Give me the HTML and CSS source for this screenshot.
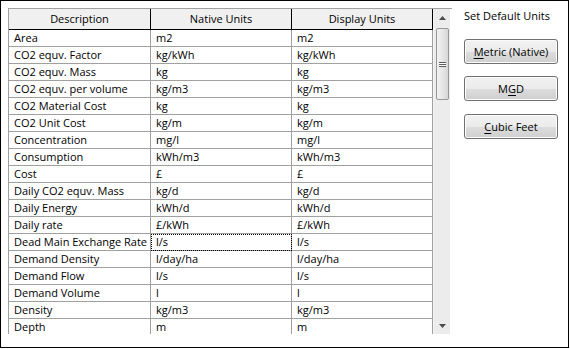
FILE: index.html
```html
<!DOCTYPE html>
<html>
	<head>
		<meta charset="utf-8" />
		<title>Units</title>
		<link rel="stylesheet" href="styles.css">
	</head>
	<body>
		<div class="window">
			<div class="grid">
				<div class="table">
					<div class="row head">
						<div class="cell">Description</div>
						<div class="cell">Native Units</div>
						<div class="cell">Display Units</div>
					</div>
					<div class="row"><div class="cell">Area</div><div class="cell">m2</div><div class="cell">m2</div></div>
					<div class="row"><div class="cell">CO2 equv. Factor</div><div class="cell">kg/kWh</div><div class="cell">kg/kWh</div></div>
					<div class="row"><div class="cell">CO2 equv. Mass</div><div class="cell">kg</div><div class="cell">kg</div></div>
					<div class="row"><div class="cell">CO2 equv. per volume</div><div class="cell">kg/m3</div><div class="cell">kg/m3</div></div>
					<div class="row"><div class="cell">CO2 Material Cost</div><div class="cell">kg</div><div class="cell">kg</div></div>
					<div class="row"><div class="cell">CO2 Unit Cost</div><div class="cell">kg/m</div><div class="cell">kg/m</div></div>
					<div class="row"><div class="cell">Concentration</div><div class="cell">mg/l</div><div class="cell">mg/l</div></div>
					<div class="row"><div class="cell">Consumption</div><div class="cell">kWh/m3</div><div class="cell">kWh/m3</div></div>
					<div class="row"><div class="cell">Cost</div><div class="cell">£</div><div class="cell">£</div></div>
					<div class="row"><div class="cell">Daily CO2 equv. Mass</div><div class="cell">kg/d</div><div class="cell">kg/d</div></div>
					<div class="row"><div class="cell">Daily Energy</div><div class="cell">kWh/d</div><div class="cell">kWh/d</div></div>
					<div class="row"><div class="cell">Daily rate</div><div class="cell">£/kWh</div><div class="cell">£/kWh</div></div>
					<div class="row"><div class="cell">Dead Main Exchange Rate</div><div class="cell focus">l/s</div><div class="cell">l/s</div></div>
					<div class="row"><div class="cell">Demand Density</div><div class="cell">l/day/ha</div><div class="cell">l/day/ha</div></div>
					<div class="row"><div class="cell">Demand Flow</div><div class="cell">l/s</div><div class="cell">l/s</div></div>
					<div class="row"><div class="cell">Demand Volume</div><div class="cell">l</div><div class="cell">l</div></div>
					<div class="row"><div class="cell">Density</div><div class="cell">kg/m3</div><div class="cell">kg/m3</div></div>
					<div class="row"><div class="cell">Depth</div><div class="cell">m</div><div class="cell">m</div></div>
				</div>
				<!-- 滚动条 -->
				<div class="scroll">
					<div class="arrow">
						<svg width="7" height="4" viewBox="0 0 7 4"><path d="M0 4H7L3.5 0Z" fill="#4d4d4d"/></svg>
					</div>
					<div class="track">
						<div class="thumb"><span class="grip"></span></div>
					</div>
					<div class="arrow">
						<svg width="7" height="4" viewBox="0 0 7 4"><path d="M0 0H7L3.5 4Z" fill="#4d4d4d"/></svg>
					</div>
				</div>
			</div>
			<div class="side">
				<p class="title">Set Default Units</p>
				<button class="btn"><u>M</u>etric (Native)</button>
				<button class="btn">M<u>G</u>D</button>
				<button class="btn last"><u>C</u>ubic Feet</button>
			</div>
		</div>
	</body>
</html>
```

FILE: styles.css
```css
*{
	margin: 0;
	padding: 0;
	box-sizing: border-box;
}
body{
	font-family: "Open Sans", "Noto Sans", sans-serif;
	font-size: 11px;
	color: #000;
	background: #fff;
}
.window{
	width: 569px;
	height: 348px;
	border: 1px solid #000;
	padding: 7px;
	display: flex;
	gap: 12px;
}
.grid{
	width: 444px;
	height: 326px;
	border-top: 1px solid #a0a0a0;
	border-left: 1px solid #a0a0a0;
	display: flex;
	overflow: hidden;
}
.table{
	width: 424px;
}
.row{
	display: grid;
	grid-template-columns: 142px 141px 141px;
	height: 17px;
	line-height: 16px;
}
.cell{
	border-right: 1px solid #a0a0a0;
	border-bottom: 1px solid #a0a0a0;
	padding-left: 5px;
	white-space: nowrap;
	overflow: hidden;
}
.head{
	height: 21px;
	line-height: 20px;
	background: #f0f0f0;
}
.head .cell{
	border-color: #000;
	text-align: center;
	padding-left: 0;
}
.focus{
	outline: 1px dotted #000;
	outline-offset: -1px;
}
.scroll{
	width: 17px;
	display: flex;
	flex-direction: column;
	background: #ececec;
	border-left: 1px solid #f4f4f4;
}
.arrow{
	height: 17px;
	display: flex;
	align-items: center;
	justify-content: center;
}
.track{
	flex: 1;
	padding-top: 2px;
}
.thumb{
	margin: 0 1px 0 2px;
	height: 72px;
	border: 1px solid #979797;
	border-radius: 2px;
	background: linear-gradient(to right, #f2f2f2, #e6e6e6 50%, #d6d6d6);
	display: flex;
	align-items: center;
	justify-content: center;
}
.grip{
	width: 7px;
	height: 5px;
	border-top: 1px solid #5c5c5c;
	border-bottom: 1px solid #5c5c5c;
	background: linear-gradient(#fff 0 1px, #5c5c5c 1px 2px, #fff 2px);
	background-size: 100% 3px;
	background-repeat: no-repeat;
}
.side{
	display: flex;
	flex-direction: column;
	align-items: flex-start;
	gap: 12px;
	font-size: 11px;
}
.title{
	line-height: 16px;
	margin-bottom: 3px;
}
.btn{
	width: 94px;
	height: 25px;
	font-family: inherit;
	font-size: 11px;
	color: #000;
	border: 1px solid #707070;
	border-radius: 3px;
	background: linear-gradient(#f2f2f2, #ebebeb 50%, #dddddd 51%, #cfcfcf);
	box-shadow: inset 0 0 0 1px #fcfcfc;
}
.btn.last{
	margin-top: 1px;
}
.btn u{
	text-decoration-thickness: 1px;
	text-underline-offset: 2px;
}
```
